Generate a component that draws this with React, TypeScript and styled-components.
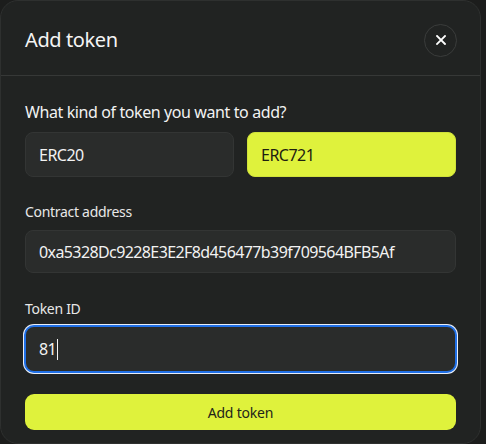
import React from "react";
import styled, { createGlobalStyle } from "styled-components";

const Global = createGlobalStyle`
  html, body { margin: 0; padding: 0; background: #1c1d1c; overflow: hidden; }
  body { font-family: "Noto Sans", "Open Sans", sans-serif; }
  * { box-sizing: border-box; }
`;

const Modal = styled.div`
  width: 481px;
  height: 444px;
  background: #212322;
  border: 1px solid #2e302f;
  border-radius: 18px;
  color: #f2f2f2;
  display: flex;
  flex-direction: column;
  overflow: hidden;
`;

const Header = styled.div`
  height: 75px;
  display: flex;
  align-items: center;
  justify-content: space-between;
  padding: 0 24px 0 24px;
  border-bottom: 1px solid #363837;
`;

const Title = styled.h2`
  margin: 0;
  font-size: 20px;
  font-weight: 400;
  letter-spacing: -0.4px;
  color: #f4f4f4;
  padding-top: 2px;
`;

const CloseButton = styled.button`
  width: 33px;
  height: 33px;
  border-radius: 50%;
  border: 1px solid #3a3c3b;
  background: transparent;
  display: flex;
  align-items: center;
  justify-content: center;
  padding: 0;
  margin-top: 4px;
  margin-right: -1px;
`;

const Body = styled.div`
  padding: 25px 24px 0 24px;
  display: flex;
  flex-direction: column;
`;

const Question = styled.div`
  font-size: 16px;
  line-height: 22px;
  color: #f2f2f2;
  letter-spacing: -0.4px;
`;

const Choices = styled.div`
  display: grid;
  grid-template-columns: 1fr 1fr;
  gap: 13px;
  margin-top: 9px;
`;

const Choice = styled.div<{ $active?: boolean }>`
  height: 45px;
  border-radius: 8px;
  background: ${(p) => (p.$active ? "#dff23c" : "#2a2c2b")};
  border: 1px solid ${(p) => (p.$active ? "#d0e23a" : "#333534")};
  color: ${(p) => (p.$active ? "#1e2010" : "#f2f2f2")};
  display: flex;
  align-items: center;
  padding-left: 13px;
  font-size: 16px;
  letter-spacing: -0.5px;
`;

const Label = styled.div<{ $top: number }>`
  font-size: 14px;
  line-height: 20px;
  color: #e8e8e8;
  margin-top: ${(p) => p.$top}px;
  letter-spacing: -0.3px;
`;

const Field = styled.div<{ $focused?: boolean }>`
  height: ${(p) => (p.$focused ? 48 : 43)}px;
  margin-top: ${(p) => (p.$focused ? 6 : 8)}px;
  margin-left: ${(p) => (p.$focused ? -1 : 0)}px;
  margin-right: ${(p) => (p.$focused ? -1 : 0)}px;
  border-radius: ${(p) => (p.$focused ? 10 : 8)}px;
  background: #2a2c2b;
  border: ${(p) => (p.$focused ? "2px solid #1f6fe6" : "1px solid #333534")};
  box-shadow: ${(p) => (p.$focused ? "0 0 0 1px #e8eef8" : "none")};
  display: flex;
  align-items: center;
  padding-left: 13px;
  font-size: 16px;
  color: #f2f2f2;
  letter-spacing: -0.6px;
`;

const Caret = styled.span`
  display: inline-block;
  width: 1px;
  height: 21px;
  background: #f4f4f4;
  margin-left: 1px;
`;

const Submit = styled.button`
  margin-top: 21px;
  height: 36px;
  border-radius: 9px;
  border: none;
  background: #dff23c;
  color: #23251a;
  font-family: inherit;
  font-size: 14px;
  letter-spacing: -0.2px;
`;

export default function App() {
  return (
    <>
      <Global />
      <Modal>
        <Header>
          <Title>Add token</Title>
          <CloseButton aria-label="Close">
            <svg width="10" height="10" viewBox="0 0 10 10">
              <path d="M1 1L9 9M9 1L1 9" stroke="#ffffff" strokeWidth="1.8" strokeLinecap="square" />
            </svg>
          </CloseButton>
        </Header>
        <Body>
          <Question>What kind of token you want to add?</Question>
          <Choices>
            <Choice>ERC20</Choice>
            <Choice $active>ERC721</Choice>
          </Choices>
          <Label $top={25}>Contract address</Label>
          <Field>0xa5328Dc9228E3E2F8d456477b39f709564BFB5Af</Field>
          <Label $top={26}>Token ID</Label>
          <Field $focused>
            81<Caret />
          </Field>
          <Submit>Add token</Submit>
        </Body>
      </Modal>
    </>
  );
}
